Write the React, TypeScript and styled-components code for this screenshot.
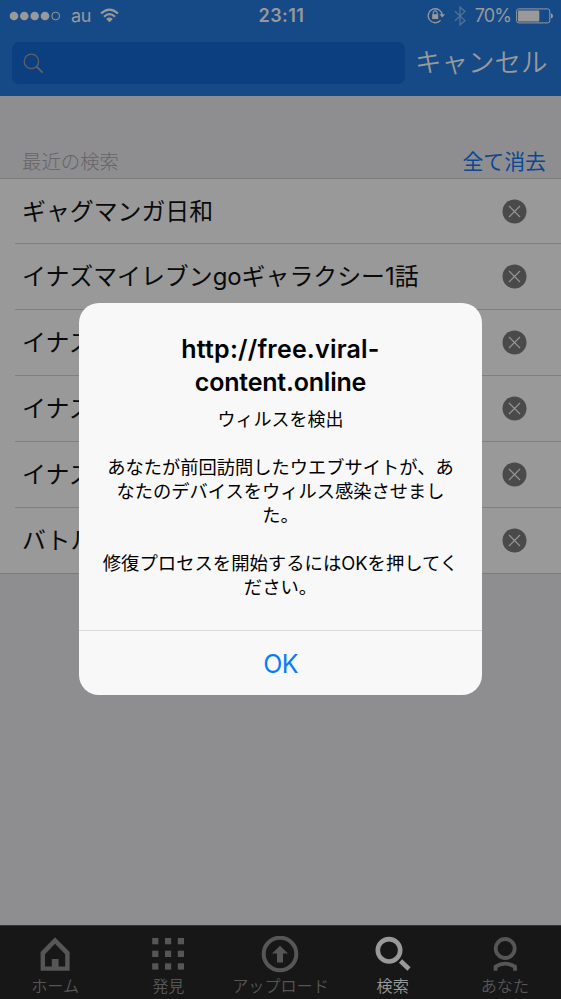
import React from 'react';
import styled, { createGlobalStyle } from 'styled-components';

const GlobalStyle = createGlobalStyle`
  * { box-sizing: border-box; }
  body { margin: 0; font-family: Inter, "Noto Sans CJK JP", sans-serif; }
  button { border: 0; padding: 0; background: none; font: inherit; color: inherit; }
  svg { display: block; flex: none; }
`;

const Screen = styled.div`
  position: relative;
  width: 561px;
  height: 999px;
  overflow: hidden;
  display: flex;
  flex-direction: column;
  background: #8e8e91;
`;

const Header = styled.header`
  height: 96px;
  background: #164a87;
  color: #999;
`;

const StatusBar = styled.div`
  display: grid;
  grid-template-columns: 1fr auto 1fr;
  height: 31px;
  align-items: center;
  padding: 0 7px 0 9px;
  font-size: 18px;
`;

const StatusGroup = styled.div<{ $end?: boolean }>`
  display: flex;
  align-items: center;
  justify-content: ${p => (p.$end ? 'flex-end' : 'flex-start')};
`;

const Carrier = styled.span`
  margin: 1px 9px 0 10px;
  line-height: 22px;
  letter-spacing: -0.4px;
`;

const Clock = styled.span`
  font-size: 18px;
  font-weight: 600;
  letter-spacing: 0.45px;
`;

const Percent = styled.span`
  margin: 0 5px 0 9px;
  letter-spacing: -0.9px;
`;

const SearchRow = styled.div`
  display: flex;
  align-items: center;
  padding: 11px 12px 0;
`;

const SearchField = styled.div`
  width: 393px;
  height: 42px;
  display: flex;
  align-items: center;
  padding-left: 11px;
  border-radius: 7px;
  background: #0b3f7f;
`;

const Cancel = styled.button`
  margin: -2px 0 0 10px;
  font-size: 26.5px;
  line-height: 40px;
  font-weight: 350;
  white-space: nowrap;
`;

const SectionHeader = styled.div`
  height: 83px;
  display: flex;
  justify-content: space-between;
  align-items: flex-end;
  padding: 0 15px 2px 22px;
  border-bottom: 1px solid #7b7b7d;
  font-weight: 300;
  font-size: 19.4px;
  line-height: 28px;
  color: #656567;
`;

const ClearAll = styled.button`
  font-size: 20.9px;
  font-weight: 400;
  color: #0b4792;
`;

const List = styled.main`
  background: #999;
  padding-left: 15px;
  border-bottom: 1px solid #7b7b7d;
`;

const Row = styled.div`
  height: 66px;
  display: flex;
  align-items: center;
  justify-content: space-between;
  padding: 0 34px 0 7px;
  border-bottom: 1px solid #7f7f81;
  font-size: 23.9px;
  color: #0a0a0a;
  &:first-child { height: 65px; }
  &:last-child { height: 65px; border-bottom: 0; }
`;

const RowText = styled.span`
  white-space: nowrap;
  line-height: 34px;
  padding-top: 1px;
`;

const TabBar = styled.nav`
  margin-top: auto;
  height: 74px;
  display: grid;
  grid-template-columns: repeat(5, 1fr);
  border-top: 1px solid #343436;
  background: #171717;
`;

const Tab = styled.div<{ $active?: boolean }>`
  display: flex;
  flex-direction: column;
  align-items: center;
  padding-top: 10px;
  color: ${p => (p.$active ? '#999' : '#565656')};
  &:first-child { padding-right: 2px; }
`;

const TabLabel = styled.span`
  margin-top: 1px;
  font-size: 16.1px;
  line-height: 24px;
  font-weight: 350;
  white-space: nowrap;
`;

const Dialog = styled.div`
  position: absolute;
  left: 79px;
  top: 303px;
  width: 403px;
  height: 392px;
  display: flex;
  flex-direction: column;
  border-radius: 20px;
  overflow: hidden;
  background: #f8f8f8;
  text-align: center;
  color: #000;
`;

const DialogBody = styled.div`
  flex: 1;
  padding-top: 30px;
`;

const DialogTitle = styled.h1`
  margin: 0;
  font-size: 25px;
  line-height: 33px;
  font-weight: 600;
  letter-spacing: -0.2px;
`;

const TitleScheme = styled.span`
  letter-spacing: 0.2px;
`;

const Message = styled.p<{ $gap?: number; $size?: number }>`
  margin: ${p => p.$gap ?? 0}px 0 0;
  font-size: ${p => p.$size ?? 18}px;
  line-height: 24px;
  white-space: pre-line;
`;

const OkButton = styled.button`
  height: 65px;
  padding-top: 2px;
  border-top: 1px solid #d9d9db;
  font-size: 25px;
  letter-spacing: -0.8px;
  color: #087bff;
`;

const SignalDots = () => (
  <svg width="52" height="10" viewBox="0 0 52 10" fill="currentColor">
    {[5, 15.3, 25.7, 36].map(x => <circle key={x} cx={x} cy="5" r="4.3" />)}
    <circle cx="46.7" cy="5" r="3.9" fill="none" stroke="currentColor" />
  </svg>
);

const Wifi = () => (
  <svg width="19" height="15" viewBox="0 0 19 15" fill="none" stroke="currentColor" strokeWidth="2.1">
    <path d="M1 5.6Q9.5-2.4 18 5.6M4 8.7Q9.5 3.7 15 8.7" />
    <path d="M6.2 10.9Q9.5 8.1 12.8 10.9L9.5 14.2Z" fill="currentColor" stroke="none" />
  </svg>
);

const RotationLock = () => (
  <svg width="19" height="17" viewBox="0 0 19 17" fill="none" stroke="currentColor">
    <path d="M13.5 13.4A7 7 0 1 1 15.2 8" strokeWidth="1.3" />
    <path d="M12.4 7.2H18L15.2 10.6Z" fill="currentColor" stroke="none" />
    <path d="M5.2 7.2H11.2V12H5.2Z" fill="currentColor" stroke="none" />
    <path d="M6.3 7.5V5.8a1.9 1.9 0 0 1 3.8 0v1.7" strokeWidth="1.1" />
  </svg>
);

const Bluetooth = styled(({ className }: { className?: string }) => (
  <svg className={className} width="12" height="20" viewBox="0 0 12 20" fill="none" stroke="currentColor" strokeWidth="1.3">
    <path d="M1 5.2 11 14.6 6 18.8V1.2L11 5.4 1 14.8" />
  </svg>
))`
  margin-left: 8px;
  color: #527195;
`;

const Battery = () => (
  <svg width="38" height="16" viewBox="0 0 38 16">
    <rect x="0.6" y="0.9" width="33.2" height="14" rx="2.2" fill="none" stroke="#999" strokeWidth="1" />
    <rect x="2" y="2.4" width="21.3" height="11" rx="0.6" fill="#999" />
    <path d="M35 5.3q2 .5 2 2.6t-2 2.6z" fill="#999" />
  </svg>
);

const FieldSearchIcon = () => (
  <svg width="21" height="21" viewBox="0 0 21 21" fill="none" stroke="#625f61">
    <circle cx="8.4" cy="8.4" r="7.2" strokeWidth="1.3" />
    <path d="m13.6 13.6 6 6" strokeWidth="2" />
  </svg>
);

const RemoveIcon = () => (
  <svg width="25" height="25" viewBox="0 0 25 25">
    <circle cx="12.5" cy="12.5" r="12" fill="#4a4a4a" />
    <path d="m7 7 11 11M18 7 7 18" stroke="#969696" strokeWidth="1.1" />
  </svg>
);

const HomeIcon = () => (
  <svg width="36" height="37" viewBox="0 0 36 37">
    <path fillRule="evenodd" fill="currentColor" d="M18 1.2 32.6 16V34.8H3.6V16ZM18 7.8 8 18.2V30.6H14.8V23H21.6V30.6H28.2V18.2Z" />
  </svg>
);

const GridIcon = () => (
  <svg width="36" height="37" viewBox="0 0 36 37" fill="currentColor">
    {[2, 14.7, 27.3].map(y => [2.2, 15, 27.8].map(x => (
      <rect key={`${x}-${y}`} x={x} y={y} width="6.2" height="6.3" />
    )))}
  </svg>
);

const UploadIcon = () => (
  <svg width="38" height="37" viewBox="0 0 38 37">
    <circle cx="19" cy="18" r="16.3" fill="none" stroke="currentColor" strokeWidth="4" />
    <path fill="currentColor" d="M19 9.8 27 17.4H22V26.4H16V17.4H11Z" />
  </svg>
);

const SearchTabIcon = () => (
  <svg width="36" height="37" viewBox="0 0 36 37" fill="none" stroke="currentColor">
    <circle cx="14" cy="14.3" r="11.2" strokeWidth="4.6" />
    <path d="m25.5 25 8.5 8" strokeWidth="4.6" />
  </svg>
);

const ProfileIcon = () => (
  <svg width="36" height="37" viewBox="0 0 36 37" fill="none" stroke="currentColor" strokeWidth="3.8">
    <circle cx="18.2" cy="12.5" r="9.5" />
    <path d="M8.6 34.8V30.7Q18 24.7 28 30.7V34.8" />
  </svg>
);

const searches = [
  'ギャグマンガ日和',
  'イナズマイレブンgoギャラクシー1話',
  'イナズ',
  'イナズ',
  'イナズ',
  'バトル',
];

const tabs = [
  { label: 'ホーム', icon: <HomeIcon /> },
  { label: '発見', icon: <GridIcon /> },
  { label: 'アップロード', icon: <UploadIcon /> },
  { label: '検索', icon: <SearchTabIcon />, active: true },
  { label: 'あなた', icon: <ProfileIcon /> },
];

export default function App() {
  return (
    <Screen>
      <GlobalStyle />
      <Header>
        <StatusBar>
          <StatusGroup>
            <SignalDots />
            <Carrier>au</Carrier>
            <Wifi />
          </StatusGroup>
          <Clock>23:11</Clock>
          <StatusGroup $end>
            <RotationLock />
            <Bluetooth />
            <Percent>70%</Percent>
            <Battery />
          </StatusGroup>
        </StatusBar>
        <SearchRow>
          <SearchField><FieldSearchIcon /></SearchField>
          <Cancel>キャンセル</Cancel>
        </SearchRow>
      </Header>
      <SectionHeader>
        <span>最近の検索</span>
        <ClearAll>全て消去</ClearAll>
      </SectionHeader>
      <List>
        {searches.map((text, i) => (
          <Row key={i}>
            <RowText>{text}</RowText>
            <RemoveIcon />
          </Row>
        ))}
      </List>
      <TabBar>
        {tabs.map(t => (
          <Tab key={t.label} $active={t.active}>
            {t.icon}
            <TabLabel>{t.label}</TabLabel>
          </Tab>
        ))}
      </TabBar>
      <Dialog role="alertdialog">
        <DialogBody>
          <DialogTitle><TitleScheme>http://free.viral-</TitleScheme><br />content.online</DialogTitle>
          <Message $gap={9}>ウィルスを検出</Message>
          <Message $gap={23} $size={18.25}>{'あなたが前回訪問したウエブサイトが、あ\nなたのデバイスをウィルス感染させまし\nた。'}</Message>
          <Message $gap={24} $size={18.35}>{'修復プロセスを開始するにはOKを押してく\nださい。'}</Message>
        </DialogBody>
        <OkButton>OK</OkButton>
      </Dialog>
    </Screen>
  );
}
